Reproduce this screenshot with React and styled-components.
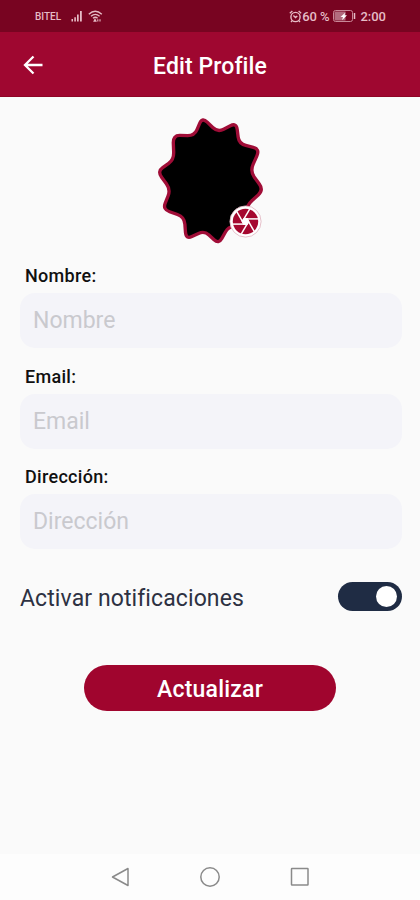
import { useState } from "react";
import styled, { createGlobalStyle } from "styled-components";

const GlobalStyle = createGlobalStyle`
  * {
    box-sizing: border-box;
  }

  body {
    margin: 0;
    background-color: #fafafa;
    font-family: Roboto, "Liberation Sans", sans-serif;
  }
`;

const Screen = styled.div`
  display: flex;
  flex-direction: column;
  width: 420px;
  height: 900px;
  overflow: hidden;
  background-color: #fafafa;
`;

const StatusBar = styled.div`
  display: flex;
  justify-content: space-between;
  align-items: center;
  height: 32px;
  padding: 0 34px 0 35px;
  background-color: #780421;
  color: #e6bcc6;
`;

const StatusGroup = styled.div`
  display: flex;
  align-items: center;
`;

const Carrier = styled.span`
  width: 27px;
  margin-right: 9px;
  font-size: 10px;
  font-weight: 500;
  line-height: 12px;
  padding-top: 2px;
`;

const StatusText = styled.span`
  font-size: 13px;
  font-weight: 500;
  line-height: 16px;
  padding-top: 1px;
  white-space: nowrap;
  letter-spacing: ${(props) => props.$spacing || "0"};
`;

const Icon = styled.svg`
  display: block;
  flex-shrink: 0;
  margin: ${(props) => props.$margin || "0"};
`;

const Header = styled.header`
  display: grid;
  grid-template-columns: 60px 1fr 60px;
  align-items: center;
  height: 65px;
  background-color: #9f0730;
  border-bottom: 1px solid #8f0526;
`;

const BackButton = styled.button`
  display: flex;
  align-items: center;
  height: 48px;
  padding: 1px 0 0 23px;
  border: none;
  background: none;
  cursor: pointer;
`;

const Title = styled.h1`
  margin: 0;
  padding-top: 5px;
  color: #fff;
  font-size: 23px;
  font-weight: 500;
  line-height: 28px;
  letter-spacing: 0.1px;
  text-align: center;
`;

const Content = styled.main`
  display: flex;
  flex: 1;
  flex-direction: column;
  padding: 13px 18px 0 20px;
`;

const AvatarContainer = styled.div`
  position: relative;
  width: 125px;
  height: 140px;
  margin-left: 130px;
`;

const CameraBadge = styled.button`
  position: absolute;
  left: 79px;
  top: 95px;
  width: 33px;
  height: 33px;
  padding: 0;
  border: none;
  background: none;
  cursor: pointer;
`;

const Form = styled.form`
  display: flex;
  flex-direction: column;
  padding-top: 15px;
`;

const Field = styled.div`
  display: flex;
  flex-direction: column;
  height: 100.5px;
`;

const Label = styled.label`
  height: 28px;
  padding-left: 5px;
  color: #101010;
  font-size: 18px;
  font-weight: 500;
  line-height: 22px;
  letter-spacing: 0.3px;
`;

const Input = styled.input`
  width: 100%;
  height: 55px;
  padding: 0 13px;
  border: none;
  border-radius: 15px;
  outline: none;
  background-color: #f4f4f9;
  color: #1f2c44;
  font-family: inherit;
  font-size: 23px;

  &::placeholder {
    color: #c9c9ce;
    opacity: 1;
  }
`;

const SwitchRow = styled.div`
  display: flex;
  justify-content: space-between;
  align-items: center;
  height: 30px;
  margin-top: 15px;
`;

const SwitchLabel = styled.span`
  padding-top: 4px;
  color: #2d3142;
  font-size: 23px;
  line-height: 30px;
  letter-spacing: 0.1px;
`;

const Switch = styled.button`
  display: flex;
  justify-content: ${(props) => (props.$on ? "flex-end" : "flex-start")};
  align-items: center;
  width: 64px;
  height: 29px;
  padding: 0 5px;
  border: none;
  border-radius: 15px;
  background-color: ${(props) => (props.$on ? "#1f2c44" : "#b8bcc6")};
  cursor: pointer;
`;

const Knob = styled.span`
  width: 21px;
  height: 21px;
  border-radius: 50%;
  background-color: #fff;
`;

const SubmitButton = styled.button`
  width: 252px;
  height: 46px;
  margin: 53px 0 0 64px;
  padding: 4px 0 0;
  border: none;
  border-radius: 23px;
  background-color: #a0052e;
  color: #fff;
  font-family: inherit;
  font-size: 23px;
  font-weight: 500;
  letter-spacing: 0.2px;
  cursor: pointer;
`;

const NavBar = styled.nav`
  display: flex;
  justify-content: space-between;
  align-items: center;
  height: 46px;
  padding: 0 110px;
  background-color: #fdfdfd;
`;

// Corners of the avatar frame, tips and valleys in turn
const framePoints = [
  [157, 22], [203, 67], [259, 38], [267, 101], [330, 117],
  [300, 184], [341, 240], [290, 286], [284, 352], [236, 349],
  [206, 402], [163, 362], [108, 388], [103, 321], [38, 298],
  [62, 239], [22, 184], [72, 149], [69, 76], [133, 77],
];

// Joins the points and rounds every corner
const roundedPath = (points, amount) => {
  const between = (a, b) => [
    a[0] + (b[0] - a[0]) * amount,
    a[1] + (b[1] - a[1]) * amount,
  ];
  const parts = points.map((point, i) => {
    const prev = points[(i + points.length - 1) % points.length];
    const next = points[(i + 1) % points.length];
    return `${i === 0 ? "M" : "L"}${between(point, prev)} Q${point} ${between(point, next)}`;
  });
  return `${parts.join(" ")} Z`;
};

const Avatar = () => (
  <Icon width="125" height="140" viewBox="0 0 375 420">
    <path
      d={roundedPath(framePoints, 0.32)}
      fill="#000"
      stroke="#a00d37"
      strokeWidth="10"
    />
  </Icon>
);

const ShutterIcon = () => (
  <Icon width="33" height="33" viewBox="0 0 33 33">
    <circle cx="16.5" cy="16.5" r="15.6" fill="#fff" stroke="#dfb0bd" strokeWidth="0.8" />
    <circle cx="16.5" cy="16.5" r="12.7" fill="#a5082f" />
    <g transform="translate(16.5 16.5)" fill="#fff" stroke="#fff" strokeWidth="1.5">
      <path d="M4 0 L2 3.500 L-2 3.500 L-4 0 L-2 -3.500 L2 -3.500 Z" stroke="none" />
      {[0, 60, 120, 180, 240, 300].map((angle) => (
        <path key={angle} d="M-1.500 -2.600 H12.900" transform={`rotate(${angle})`} />
      ))}
    </g>
  </Icon>
);

const fields = [
  { name: "nombre", label: "Nombre" },
  { name: "email", label: "Email" },
  { name: "direccion", label: "Dirección" },
];

const App = () => {
  const [values, setValues] = useState({ nombre: "", email: "", direccion: "" });
  const [notifications, setNotifications] = useState(true);

  const handleChange = (e) => {
    setValues((prev) => ({ ...prev, [e.target.name]: e.target.value }));
  };

  return (
    <Screen>
      <GlobalStyle />
      <StatusBar>
        <StatusGroup>
          <Carrier>BITEL</Carrier>
          <Icon width="12" height="12" viewBox="0 0 12 12" fill="currentColor">
            <path d="M0.5 9h1.5v2.5H0.5zM3.3 7.3h1.6v4.2H3.3zM6 4.5h1.7v7H6zM9 1h1.8v10.5H9z" />
          </Icon>
          <Icon
            width="15"
            height="13"
            viewBox="0 0 15 13"
            fill="none"
            stroke="currentColor"
            strokeWidth="1.4"
            $margin="0 0 0 5px"
          >
            <path d="M0.8 4.2Q7.2-1.8 13.8 4.2M3 6.2Q7.3 2.6 11.6 6.2M5 8.2Q7.3 6.4 9.6 8.2" />
            <path d="M6 11.3l1-2 1 2zM9.8 9.2v2.4M12 9.2v2.4" strokeWidth="1.1" />
          </Icon>
        </StatusGroup>
        <StatusGroup>
          <Icon
            width="13"
            height="13"
            viewBox="0 0 13 13"
            fill="none"
            stroke="currentColor"
            strokeWidth="1.4"
          >
            <circle cx="6.5" cy="7" r="4.6" />
            <path d="M0.8 3.2L3.4 1M9.6 1l2.6 2.2M4.4 5.6L6.5 7.5l1.8-1.6M3.2 10.6L2 12M9.8 10.6L11 12" />
          </Icon>
          <StatusText $spacing="-0.1px">60 %</StatusText>
          <Icon width="23" height="12" viewBox="0 0 23 12" $margin="0 4px 0 4px">
            <rect x="0.5" y="0.5" width="19" height="11" rx="2" fill="none" stroke="#c98797" />
            <rect x="1.5" y="1.5" width="11" height="9" fill="#b26b7e" />
            <path d="M12.500 2.500L7.500 7h2.500l-1 3.200 5-5h-2.500z" fill="#fff" />
            <path d="M21.5 3v6" stroke="#e6bcc6" strokeWidth="1.5" />
          </Icon>
          <StatusText>2:00</StatusText>
        </StatusGroup>
      </StatusBar>

      <Header>
        <BackButton aria-label="Back">
          <Icon
            width="20"
            height="20"
            viewBox="0 0 20 20"
            fill="none"
            stroke="#fff"
            strokeWidth="2.3"
          >
            <path d="M19.5 10H2.5M10.5 1.5L2 10l8.5 8.5" />
          </Icon>
        </BackButton>
        <Title>Edit Profile</Title>
      </Header>

      <Content>
        <AvatarContainer>
          <Avatar />
          <CameraBadge aria-label="Change photo">
            <ShutterIcon />
          </CameraBadge>
        </AvatarContainer>

        <Form onSubmit={(e) => e.preventDefault()}>
          {fields.map((field) => (
            <Field key={field.name}>
              <Label htmlFor={field.name}>{field.label}:</Label>
              <Input
                id={field.name}
                name={field.name}
                placeholder={field.label}
                value={values[field.name]}
                onChange={handleChange}
              />
            </Field>
          ))}

          <SwitchRow>
            <SwitchLabel>Activar notificaciones</SwitchLabel>
            <Switch
              type="button"
              role="switch"
              aria-label="Activar notificaciones"
              aria-checked={notifications}
              $on={notifications}
              onClick={() => setNotifications(!notifications)}
            >
              <Knob />
            </Switch>
          </SwitchRow>

          <SubmitButton type="submit">Actualizar</SubmitButton>
        </Form>
      </Content>

      <NavBar>
        <Icon width="20" height="22" viewBox="0 0 20 22" fill="none" stroke="#8a8a8a" strokeWidth="1.5">
          <path d="M18 2.5V19.5L2.5 11z" strokeLinejoin="round" />
        </Icon>
        <Icon width="22" height="22" viewBox="0 0 22 22" fill="none" stroke="#8a8a8a" strokeWidth="1.5">
          <circle cx="11" cy="11" r="9.2" />
        </Icon>
        <Icon width="20" height="20" viewBox="0 0 20 20" fill="none" stroke="#8a8a8a" strokeWidth="1.5">
          <rect x="1.5" y="1.5" width="16.5" height="16.5" rx="0.5" />
        </Icon>
      </NavBar>
    </Screen>
  );
};

export default App;
